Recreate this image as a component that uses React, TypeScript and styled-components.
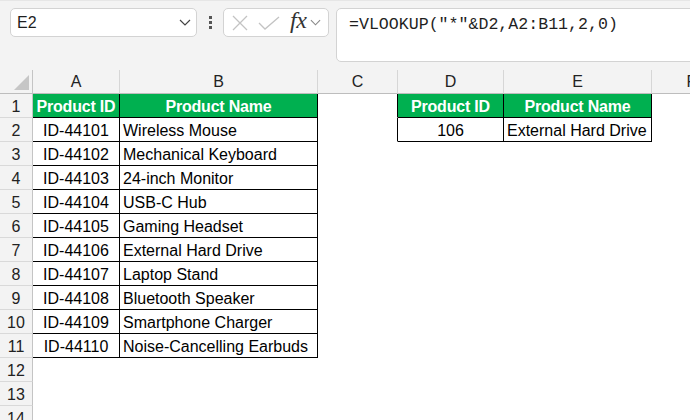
import React from 'react';
import styled, { createGlobalStyle } from 'styled-components';

const GlobalStyle = createGlobalStyle`
  html, body { margin: 0; padding: 0; background: #fff; overflow: hidden; }
  * { box-sizing: border-box; }
`;

const Page = styled.div`
  width: 690px;
  height: 420px;
  overflow: hidden;
  background: #fff;
  font-family: "Liberation Sans", Arial, sans-serif;
  display: flex;
  flex-direction: column;
`;

const TopBar = styled.div`
  height: 70px;
  flex: none;
  background: #f3f3f3;
  border-top: 1px solid #e6e6e6;
  display: flex;
  align-items: flex-start;
  padding: 7px 0 0 10px;
`;

const Box = styled.div`
  background: #fff;
  border: 1px solid #d3d3d3;
  border-radius: 5px;
  flex: none;
`;

const NameBox = styled(Box)`
  width: 187px;
  height: 29px;
  display: flex;
  align-items: center;
  justify-content: space-between;
  padding: 0 5px 0 6px;
  font-size: 16px;
  color: #1f1f1f;
`;

const Dots = styled.div`
  width: 26px;
  height: 29px;
  flex: none;
  display: flex;
  flex-direction: column;
  align-items: center;
  justify-content: center;
  gap: 2px;
  span {
    width: 3px;
    height: 3px;
    background: #555;
  }
`;

const FxBox = styled(Box)`
  width: 106px;
  height: 29px;
  margin-right: 7px;
  display: flex;
  align-items: center;
  padding: 0 0 0 8px;
`;

const FxText = styled.span`
  font-family: "Liberation Serif", "Times New Roman", serif;
  font-style: italic;
  font-size: 24px;
  color: #333;
  margin: -4px 4px 0 10px;
  letter-spacing: -0.5px;
`;

const FormulaBar = styled(Box)`
  width: 420px;
  height: 54px;
  padding: 6px 0 0 12px;
  font-family: "Liberation Mono", "Courier New", monospace;
  font-size: 16.6px;
  color: #1f1f1f;
  white-space: pre;
`;

const Sheet = styled.div`
  display: grid;
  grid-template-columns: 33px 87px 198px 80px 106px 148px 80px;
  grid-template-rows: 24px;
  grid-auto-rows: 24px;
  width: 732px;
  flex: none;
  font-size: 16px;
`;

const ColHead = styled.div`
  background: #f3f3f3;
  border-right: 1px solid #d6d6d6;
  border-bottom: 1px solid #bdbdbd;
  color: #222;
  display: flex;
  align-items: center;
  justify-content: center;
  padding-top: 1px;
`;

const Corner = styled(ColHead)`
  justify-content: flex-end;
  align-items: flex-end;
  padding: 0 3px 3px 0;
  border-right-color: #c4c4c4;
`;

const RowHead = styled.div`
  background: #f3f3f3;
  border-right: 1px solid #c4c4c4;
  border-bottom: 1px solid #d9d9d9;
  color: #222;
  display: flex;
  align-items: center;
  justify-content: center;
  padding-top: 2px;
`;

const Cell = styled.div<{ $r?: boolean; $b?: boolean; $head?: boolean; $center?: boolean }>`
  border-right: 1px solid ${p => (p.$r ? '#000' : 'transparent')};
  border-bottom: 1px solid ${p => (p.$b ? '#000' : 'transparent')};
  background: ${p => (p.$head ? '#00b050' : '#fff')};
  color: ${p => (p.$head ? '#fff' : '#000')};
  font-weight: ${p => (p.$head ? 700 : 400)};
  letter-spacing: ${p => (p.$head ? '-0.2px' : '0')};
  display: flex;
  align-items: center;
  justify-content: ${p => (p.$center ? 'center' : 'flex-start')};
  padding: 2px 3px 0 3px;
  white-space: nowrap;
  overflow: visible;
`;

const products = [
  ['ID-44101', 'Wireless Mouse'],
  ['ID-44102', 'Mechanical Keyboard'],
  ['ID-44103', '24-inch Monitor'],
  ['ID-44104', 'USB-C Hub'],
  ['ID-44105', 'Gaming Headset'],
  ['ID-44106', 'External Hard Drive'],
  ['ID-44107', 'Laptop Stand'],
  ['ID-44108', 'Bluetooth Speaker'],
  ['ID-44109', 'Smartphone Charger'],
  ['ID-44110', 'Noise-Cancelling Earbuds'],
];

const lookup: Record<number, [string, string, boolean]> = {
  1: ['Product ID', 'Product Name', true],
  2: ['106', 'External Hard Drive', false],
};

const Chevron = ({ color = '#444', w = 12 }: { color?: string; w?: number }) => (
  <svg width={w} height="7" viewBox="0 0 12 7">
    <polyline points="1,1 6,6 11,1" fill="none" stroke={color} strokeWidth="1.2" />
  </svg>
);

export default function App() {
  const rows: React.ReactNode[] = [];
  for (let r = 1; r <= 14; r++) {
    const inTable = r <= 11;
    const isHead = r === 1;
    const data = r >= 2 && r <= 11 ? products[r - 2] : null;
    const lk = lookup[r];
    rows.push(
      <React.Fragment key={r}>
        <RowHead>{r}</RowHead>
        <Cell $r={inTable} $b={inTable} $head={isHead} $center>
          {isHead ? 'Product ID' : data ? data[0] : ''}
        </Cell>
        <Cell $r={inTable} $b={inTable} $head={isHead} $center={isHead}>
          {isHead ? 'Product Name' : data ? data[1] : ''}
        </Cell>
        <Cell $r={!!lk} />
        <Cell $r={!!lk} $b={!!lk} $head={lk ? lk[2] : false} $center>
          {lk ? lk[0] : ''}
        </Cell>
        <Cell $r={!!lk} $b={!!lk} $head={lk ? lk[2] : false} $center={lk ? lk[2] : false}>
          {lk ? lk[1] : ''}
        </Cell>
        <Cell />
      </React.Fragment>
    );
  }

  return (
    <Page>
      <GlobalStyle />
      <TopBar>
        <NameBox>
          <span>E2</span>
          <Chevron />
        </NameBox>
        <Dots>
          <span />
          <span />
          <span />
        </Dots>
        <FxBox>
          <svg width="16" height="16" viewBox="0 0 16 16">
            <path d="M1 1 L15 15 M15 1 L1 15" stroke="#c3c3c3" strokeWidth="1.3" fill="none" />
          </svg>
          <svg width="22" height="14" viewBox="0 0 22 14" style={{ marginLeft: 10 }}>
            <polyline points="1,7 7,13 21,1" stroke="#c3c3c3" strokeWidth="1.3" fill="none" />
          </svg>
          <FxText>fx</FxText>
          <Chevron color="#888" w={11} />
        </FxBox>
        <FormulaBar>=VLOOKUP("*"&amp;D2,A2:B11,2,0)</FormulaBar>
      </TopBar>
      <Sheet>
        <Corner>
          <svg width="15" height="15" viewBox="0 0 15 15">
            <polygon points="15,0 15,15 0,15" fill="#c6c6c6" />
          </svg>
        </Corner>
        {['A', 'B', 'C', 'D', 'E', 'F'].map(c => (
          <ColHead key={c}>{c}</ColHead>
        ))}
        {rows}
      </Sheet>
    </Page>
  );
}
